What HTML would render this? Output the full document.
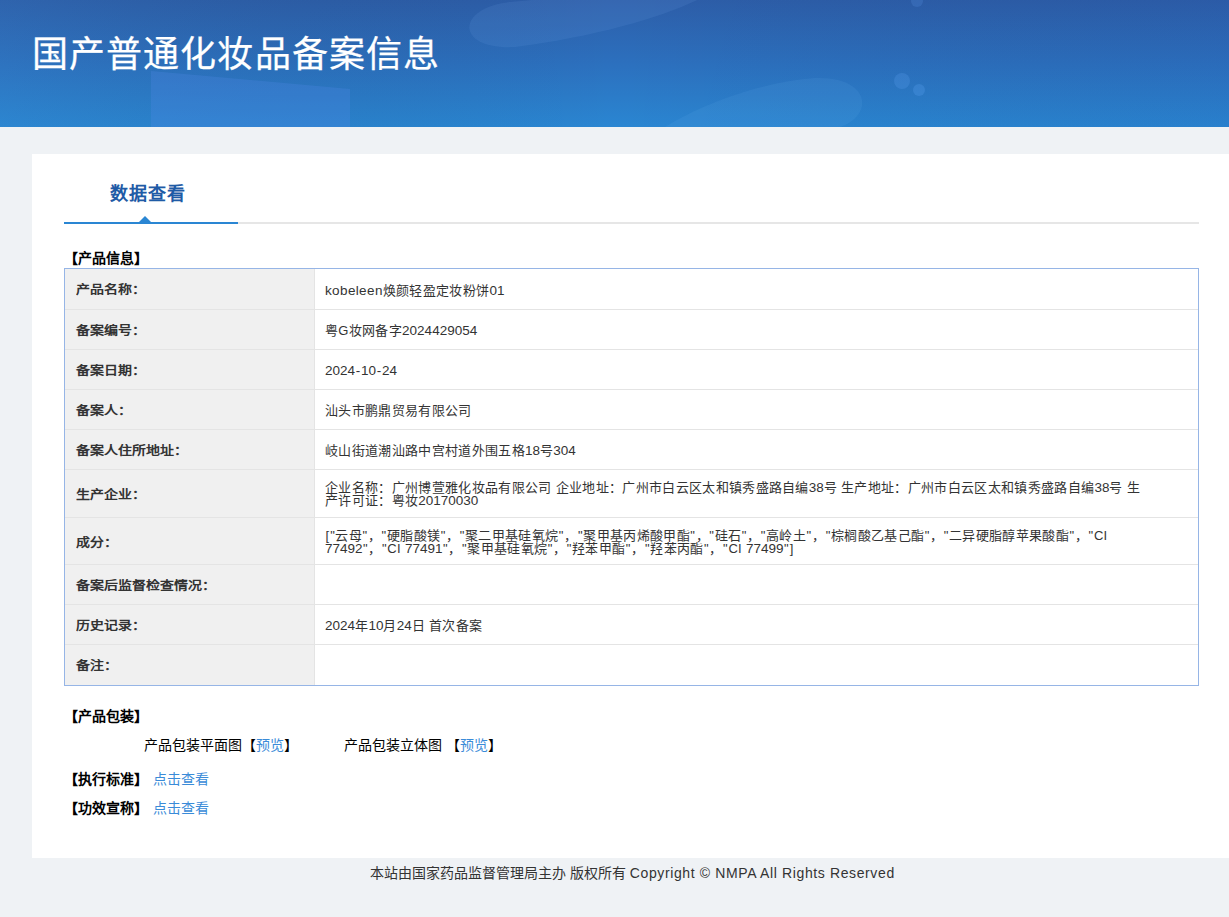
<!DOCTYPE html>
<html lang="zh-CN"><head><meta charset="utf-8">
<style>
html,body{margin:0;padding:0;}
body{width:1229px;height:917px;overflow:hidden;position:relative;background:#eff2f5;font-family:"Liberation Sans",sans-serif;color:#333;}
.abs{position:absolute;white-space:nowrap;}
#hdr{position:absolute;left:0;top:0;width:1229px;height:127px;overflow:hidden;
 background:linear-gradient(180deg,#2c5aa8 0%,#2d6cbc 45%,#2b86d0 100%);}
#title{left:32px;top:32px;font-size:36px;line-height:46px;color:#fff;letter-spacing:1.1px;-webkit-text-stroke:0.25px #fff;}
#card{position:absolute;left:32px;top:154px;width:1210px;height:704px;background:#fff;}
#tab{left:110px;top:182px;font-size:18px;line-height:24px;font-weight:bold;color:#1f5ba6;letter-spacing:1px;}
#lineb{position:absolute;left:64px;top:222px;width:174px;height:2px;background:#2a86d3;}
#lineg{position:absolute;left:238px;top:222px;width:961px;height:2px;background:#e6e6e6;}
#tri{position:absolute;left:138.5px;top:215.5px;width:0;height:0;border-left:6.75px solid transparent;border-right:6.75px solid transparent;border-bottom:6.5px solid #2a86d3;}
.sec{font-size:14px;letter-spacing:0.1px;line-height:16px;font-weight:bold;color:#000;}
#tbl{position:absolute;left:64px;top:268px;width:1133px;height:416px;border:1px solid #96b5e6;background:#fff;}
.row{position:absolute;left:0;width:1133px;border-bottom:1px solid #e4e4e4;}
.lab{position:absolute;left:0;top:0;width:249px;height:100%;background:#f0f0f0;border-right:1px solid #e4e4e4;}
.lab span{position:absolute;left:11px;font-size:14px;line-height:16px;font-weight:bold;color:#333;white-space:nowrap;transform:scaleY(0.86);transform-origin:0 50%;}
.c{font-family:"Liberation Sans",sans-serif;}
.la{letter-spacing:0.37px;font-size:13.5px;}
.dg{letter-spacing:0px;font-size:13.5px;}
.hy{padding:0 0.75px;}
.ft{letter-spacing:0.62px;}
.q{font-style:normal;padding:0 0.4px;}
.val{position:absolute;left:260px;font-size:13px;line-height:13px;letter-spacing:0.33px;color:#333;white-space:nowrap;}
.lnk{color:#3a8bd8;}
#foot{left:370px;top:864px;font-size:14px;line-height:18px;color:#333;}
</style></head><body>
<div id="hdr"><svg width="1229" height="127" viewBox="0 0 1229 127" style="position:absolute;left:0;top:0">
<defs>
<linearGradient id="gv" x1="0" y1="0" x2="0" y2="1"><stop offset="0" stop-color="#2d5ea9"/><stop offset="0.5" stop-color="#2c70be"/><stop offset="1" stop-color="#2a86d2"/></linearGradient>
<linearGradient id="gh" x1="0" y1="0" x2="1" y2="0"><stop offset="0" stop-color="#3a88c8" stop-opacity="0.14"/><stop offset="0.5" stop-color="#000" stop-opacity="0"/><stop offset="1" stop-color="#1a3a90" stop-opacity="0.08"/></linearGradient>
</defs>
<rect width="1229" height="127" fill="url(#gv)"/>
<rect width="1229" height="127" fill="url(#gh)"/>
<polygon points="151,71 350,89 350,127 151,127" fill="#5a8ef0" opacity="0.22"/>
<path d="M515,47 C455,50 455,8 510,2 L600,-6 L705,-4 C670,15 600,36 515,47 Z" fill="#7ab0f0" opacity="0.12"/>
<path d="M665,127 C700,105 760,82 815,78 C870,76 875,115 840,127 Z" fill="#7ab8f5" opacity="0.10"/>
<circle cx="902" cy="81" r="8" fill="#5aa0f0" opacity="0.25"/>
<circle cx="919" cy="90" r="6" fill="#5aa0f0" opacity="0.28"/>
<circle cx="917" cy="1" r="6" fill="#5a98e8" opacity="0.22"/>
</svg></div>
<div id="title" class="abs">国产普通化妆品备案信息</div>
<div id="card"></div>
<div id="tab" class="abs">数据查看</div>
<div id="lineg"></div><div id="lineb"></div><div id="tri"></div>
<div class="abs sec" style="left:64px;top:249.5px;">【产品信息】</div>
<div id="tbl">
 <div class="row" style="top:0px;height:40px;"><div class="lab"><span style="top:13px">产品名称：</span></div><div class="val" style="top:15px"><span class="la">kobeleen</span>焕颜轻盈定妆粉饼<span class="dg">01</span></div></div>
 <div class="row" style="top:41px;height:39px;"><div class="lab"><span style="top:13px">备案编号：</span></div><div class="val" style="top:14px">粤G妆网备字<span class="dg">2024429054</span></div></div>
 <div class="row" style="top:81px;height:39px;"><div class="lab"><span style="top:13px">备案日期：</span></div><div class="val" style="top:14px"><span class="dg">2024<span class="hy">-</span>10<span class="hy">-</span>24</span></div></div>
 <div class="row" style="top:121px;height:39px;"><div class="lab"><span style="top:13px">备案人：</span></div><div class="val" style="top:14px">汕头市鹏鼎贸易有限公司</div></div>
 <div class="row" style="top:161px;height:39px;"><div class="lab"><span style="top:13px">备案人住所地址：</span></div><div class="val" style="top:14px">岐山街道潮汕路中宫村道外围五格<span class="dg">18</span>号<span class="dg">304</span></div></div>
 <div class="row" style="top:201px;height:47px;"><div class="lab"><span style="top:17px">生产企业：</span></div><div class="val" style="top:11px">企业名称：广州博萱雅化妆品有限公司 企业地址：广州市白云区太和镇秀盛路自编<span class="dg">38</span>号 生产地址：广州市白云区太和镇秀盛路自编<span class="dg">38</span>号 生<br>产许可证：粤妆<span class="dg">20170030</span></div></div>
 <div class="row" style="top:249px;height:46px;"><div class="lab"><span style="top:17px">成分：</span></div><div class="val" style="top:11px"><i class="q">[</i><i class="q">"</i>云母<i class="q">"</i>，<i class="q">"</i>硬脂酸镁<i class="q">"</i>，<i class="q">"</i>聚二甲基硅氧烷<i class="q">"</i>，<i class="q">"</i>聚甲基丙烯酸甲酯<i class="q">"</i>，<i class="q">"</i>硅石<i class="q">"</i>，<i class="q">"</i>高岭土<i class="q">"</i>，<i class="q">"</i>棕榈酸乙基己酯<i class="q">"</i>，<i class="q">"</i>二异硬脂醇苹果酸酯<i class="q">"</i>，<i class="q">"</i>CI<br><span class="dg">77492</span><i class="q">"</i>，<i class="q">"</i>CI <span class="dg">77491</span><i class="q">"</i>，<i class="q">"</i>聚甲基硅氧烷<i class="q">"</i>，<i class="q">"</i>羟苯甲酯<i class="q">"</i>，<i class="q">"</i>羟苯丙酯<i class="q">"</i>，<i class="q">"</i>CI <span class="dg">77499</span><i class="q">"</i><i class="q">]</i></div></div>
 <div class="row" style="top:296px;height:39px;"><div class="lab"><span style="top:13px">备案后监督检查情况：</span></div></div>
 <div class="row" style="top:336px;height:39px;"><div class="lab"><span style="top:13px">历史记录：</span></div><div class="val" style="top:14px"><span class="dg">2024</span>年<span class="dg">10</span>月<span class="dg">24</span>日 首次备案</div></div>
 <div class="row" style="top:376px;height:40px;border-bottom:0;"><div class="lab"><span style="top:13px">备注：</span></div></div>
</div>
<div class="abs sec" style="left:64px;top:707.5px;">【产品包装】</div>
<div class="abs" style="left:144px;top:737px;font-size:14px;letter-spacing:0px;line-height:16px;color:#000;">产品包装平面图【<span class="lnk">预览</span>】</div>
<div class="abs" style="left:344px;top:737px;font-size:14px;letter-spacing:0px;line-height:16px;color:#000;">产品包装立体图 【<span class="lnk">预览</span>】</div>
<div class="abs sec" style="left:64px;top:771px;">【执行标准】 <span class="lnk" style="font-weight:normal;font-size:14px;letter-spacing:0px">点击查看</span></div>
<div class="abs sec" style="left:64px;top:800px;">【功效宣称】 <span class="lnk" style="font-weight:normal;font-size:14px;letter-spacing:0px">点击查看</span></div>
<div id="foot" class="abs">本站由国家药品监督管理局主办 版权所有 <span class="ft">Copyright © NMPA All Rights Reserved</span></div>
</body></html>
